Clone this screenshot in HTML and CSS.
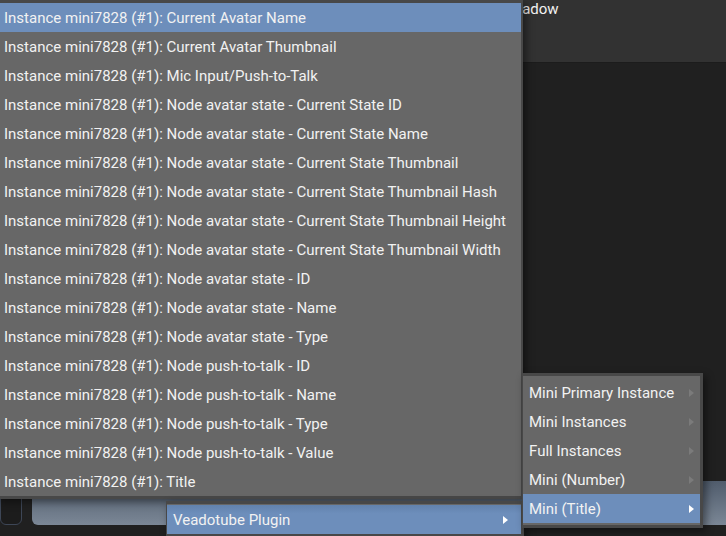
FILE: index.html
```html
<!DOCTYPE html>
<html lang="en">
<head>
    <meta charset="UTF-8" />
    <meta name="viewport" content="width=device-width, initial-scale=1.0" />
    <title>Veadotube Plugin</title>
    <link rel="stylesheet" href="styles.css">
</head>
<body>
    <div class="app">
        <div class="top-strip">
            <span class="field-label">Shadow</span>
        </div>
        <div class="work-area">
            <div class="bottom-row">
                <div class="side-box"></div>
                <div class="wide-bar"></div>
            </div>
        </div>
    </div>

    <div class="menu main-menu">
        <div class="menu-item active">Instance mini7828 (#1): Current Avatar Name</div>
        <div class="menu-item">Instance mini7828 (#1): Current Avatar Thumbnail</div>
        <div class="menu-item">Instance mini7828 (#1): Mic Input/Push-to-Talk</div>
        <div class="menu-item">Instance mini7828 (#1): Node avatar state - Current State ID</div>
        <div class="menu-item">Instance mini7828 (#1): Node avatar state - Current State Name</div>
        <div class="menu-item">Instance mini7828 (#1): Node avatar state - Current State Thumbnail</div>
        <div class="menu-item">Instance mini7828 (#1): Node avatar state - Current State Thumbnail Hash</div>
        <div class="menu-item">Instance mini7828 (#1): Node avatar state - Current State Thumbnail Height</div>
        <div class="menu-item">Instance mini7828 (#1): Node avatar state - Current State Thumbnail Width</div>
        <div class="menu-item">Instance mini7828 (#1): Node avatar state - ID</div>
        <div class="menu-item">Instance mini7828 (#1): Node avatar state - Name</div>
        <div class="menu-item">Instance mini7828 (#1): Node avatar state - Type</div>
        <div class="menu-item">Instance mini7828 (#1): Node push-to-talk - ID</div>
        <div class="menu-item">Instance mini7828 (#1): Node push-to-talk - Name</div>
        <div class="menu-item">Instance mini7828 (#1): Node push-to-talk - Type</div>
        <div class="menu-item">Instance mini7828 (#1): Node push-to-talk - Value</div>
        <div class="menu-item">Instance mini7828 (#1): Title</div>
    </div>

    <div class="menu plugin-menu">
        <div class="menu-item active has-sub">Veadotube Plugin <span class="arrow"></span></div>
    </div>

    <div class="menu sub-menu">
        <div class="menu-item has-sub">Mini Primary Instance <span class="arrow"></span></div>
        <div class="menu-item has-sub">Mini Instances <span class="arrow"></span></div>
        <div class="menu-item has-sub">Full Instances <span class="arrow"></span></div>
        <div class="menu-item has-sub">Mini (Number) <span class="arrow"></span></div>
        <div class="menu-item active has-sub">Mini (Title) <span class="arrow"></span></div>
    </div>
</body>
</html>
```

FILE: styles.css
```css
body {
    margin: 0;
    width: 726px;
    height: 536px;
    overflow: hidden;
    position: relative;
    background-color: #202020;
    font-family: Roboto, "Liberation Sans", sans-serif;
    font-size: 15px;
    color: #f2f2f2;
}

.app {
    display: flex;
    flex-direction: column;
    height: 536px;
}

.top-strip {
    height: 63px;
    background-color: #323232;
    border-bottom: 1px solid #1c1c1c;
    padding-left: 505px;
    box-sizing: border-box;
}

.field-label {
    display: block;
    line-height: 18px;
}

.work-area {
    flex: 1;
    display: flex;
    align-items: flex-end;
    padding-bottom: 11px;
    background-color: #202020;
}

.bottom-row {
    display: flex;
    width: 100%;
    height: 44px;
    gap: 10px;
}

.side-box {
    width: 22px;
    background-color: #1c1c1c;
    border: 1px solid #3d4656;
    border-radius: 6px;
    box-sizing: border-box;
}

.wide-bar {
    flex: 1;
    margin-right: -20px;
    border-radius: 6px;
    background: linear-gradient(#505c6c, #7b8796);
}

/* menus */
.menu {
    position: absolute;
    background-color: #676767;
    border: 3px solid #484848;
    box-shadow: 3px 3px 8px rgba(0, 0, 0, 0.45);
}

.menu-item {
    height: 29px;
    line-height: 27px;
    padding-top: 2px;
    padding-left: 4px;
    box-sizing: border-box;
    white-space: nowrap;
    position: relative;
}

.menu-item.active {
    background-color: #6d8ebb;
}

.main-menu {
    left: -3px;
    top: 0;
    width: 521px;
    border-right-width: 2px;
}

.plugin-menu {
    left: 166px;
    top: 501px;
    width: 354px;
    padding-top: 1px;
    border-left-width: 1px;
}

.plugin-menu .menu-item {
    padding-left: 6px;
    background: linear-gradient(#6282ad, #6d8ebb 30%);
}

.sub-menu {
    left: 522px;
    top: 373px;
    width: 177px;
    padding: 2px 0;
    border-left-width: 1px;
}

.sub-menu .menu-item {
    padding-left: 6px;
}

.arrow {
    position: absolute;
    top: 11px;
    width: 0;
    height: 0;
    border-top: 4px solid transparent;
    border-bottom: 4px solid transparent;
    border-left: 5px solid #7b7b7b;
}

.plugin-menu .arrow {
    right: 13px;
}

.sub-menu .arrow {
    right: 6px;
}

.menu-item.active .arrow {
    border-left-color: #ffffff;
}
```
